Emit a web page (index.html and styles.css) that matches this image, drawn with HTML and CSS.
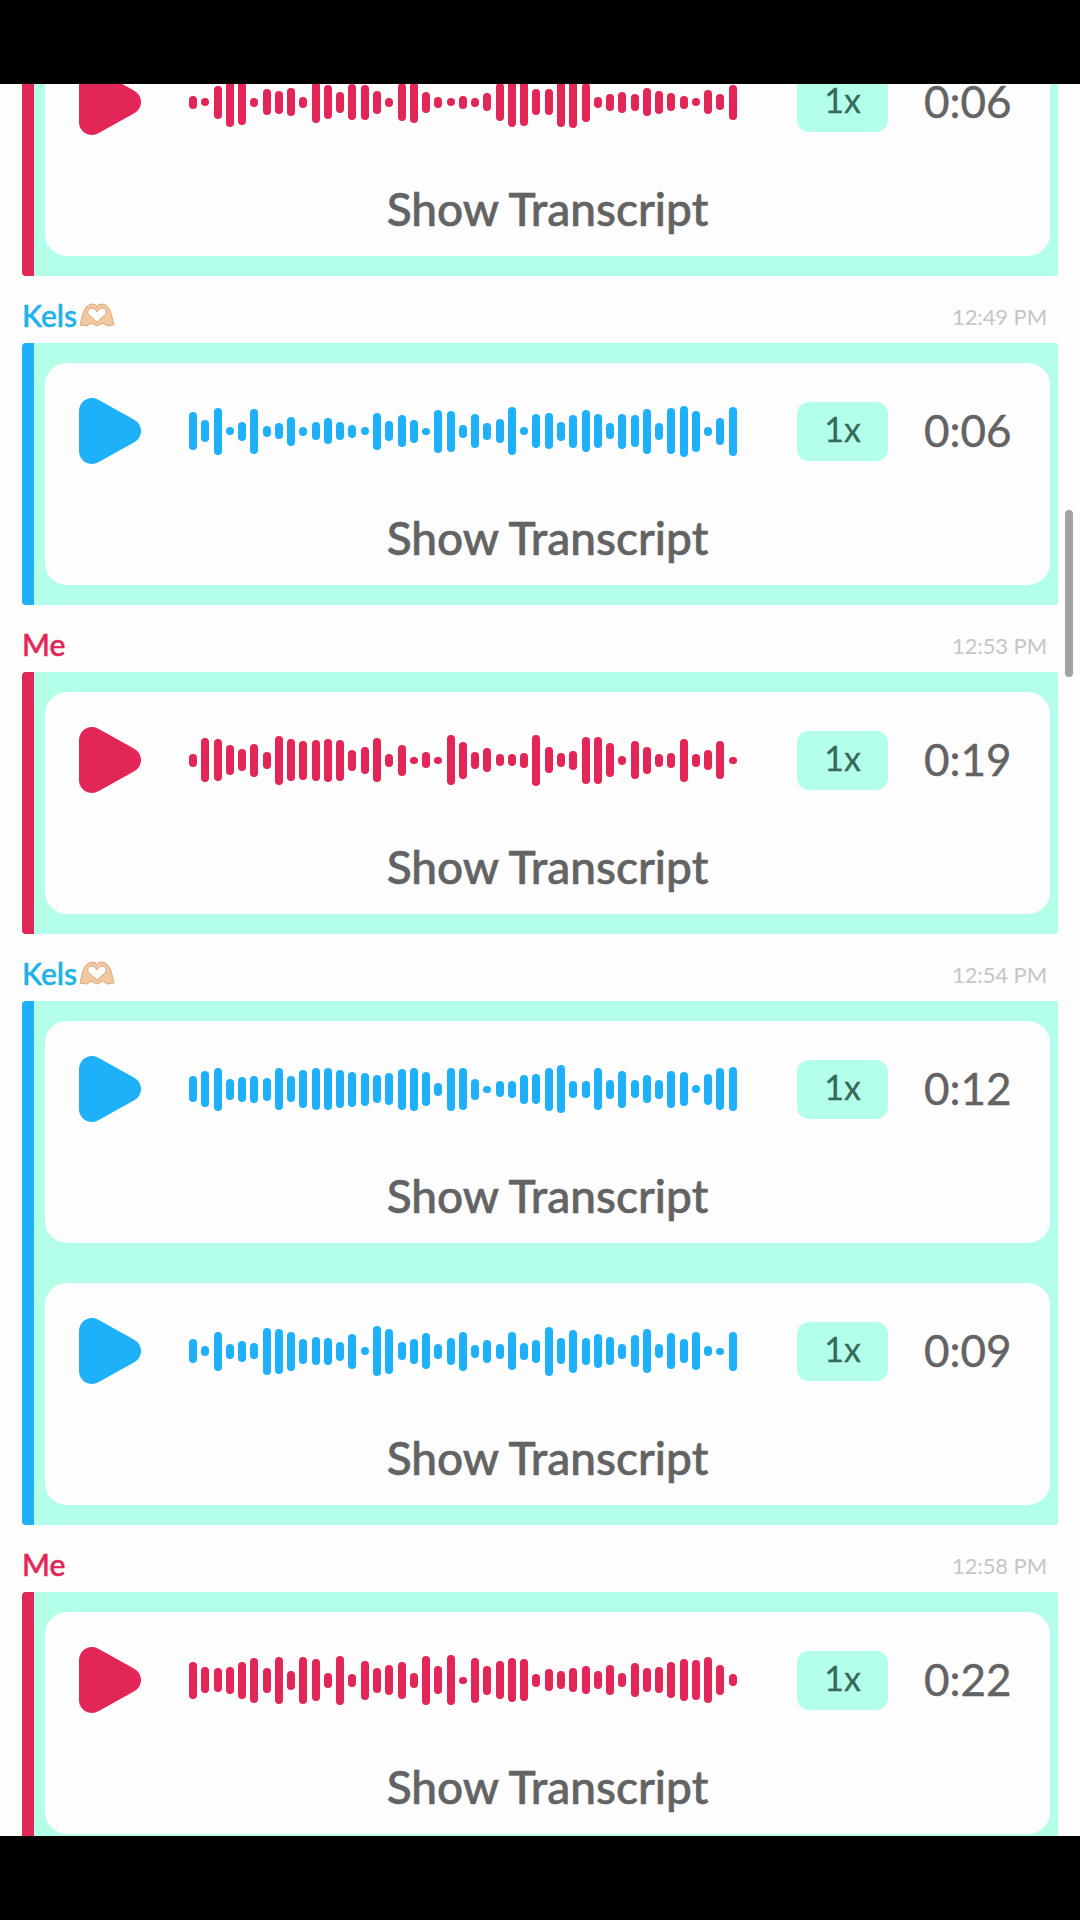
FILE: index.html
```html
<!DOCTYPE html>
<html lang="en">
<head>
    <meta charset="UTF-8">
    <meta name="viewport" content="width=device-width, initial-scale=1.0">
    <title>Chat</title>
    <link rel="stylesheet" href="styles.css">
</head>

<body>
    <svg class="defs" width="0" height="0">
        <symbol id="play" viewBox="0 0 62 66">
            <path d="M13 13 V53 L49 33 Z" fill="currentColor" stroke="currentColor" stroke-width="26" stroke-linejoin="round"/>
        </symbol>
        <symbol id="hearthands" viewBox="0 0 36 24">
            <path d="M1 22 L4 10 Q7 1 14 1 Q17 1 18 4 Q19 1 22 1 Q29 1 32 10 L35 22 L28 23 L24 20 L18 23 L12 20 L8 23 Z" fill="#f3c7a0" stroke="#dca97f" stroke-width="1"/>
            <path d="M18 19 L9 11 Q8 5 13 5 Q16 5 18 9 Q20 5 23 5 Q28 5 27 11 Z" fill="#fdfdfd" stroke="#dca97f" stroke-width="1"/>
        </symbol>
    </svg>

    <div class="bar"></div>

    <div class="chat">
        <!-- Scrolled part way through this one -->
        <div class="bubble me first">
            <div class="card">
                <div class="player">
                    <svg class="play"><use href="#play"/></svg>
                    <div class="wave" data-h="13 8 33 49 46 9 26 23 28 11 41 34 21 36 35 23 9 38 41 21 11 8 13 9 18 38 49 48 26 26 49 51 39 11 17 21 17 28 23 18 13 8 24 16 35"></div>
                    <div class="speed">1x</div>
                    <div class="duration">0:06</div>
                </div>
                <div class="transcript">Show Transcript</div>
            </div>
        </div>

        <div class="label kels">
            <span class="name">Kels<svg class="emoji"><use href="#hearthands"/></svg></span>
            <span class="time">12:49 PM</span>
        </div>
        <div class="bubble">
            <div class="card">
                <div class="player">
                    <svg class="play"><use href="#play"/></svg>
                    <div class="wave" data-h="38 22 47 8 19 45 11 16 29 9 18 26 18 13 8 37 20 32 23 7 43 41 13 34 17 24 48 8 34 36 19 33 42 34 16 35 32 45 17 46 51 41 9 27 49"></div>
                    <div class="speed">1x</div>
                    <div class="duration">0:06</div>
                </div>
                <div class="transcript">Show Transcript</div>
            </div>
        </div>

        <div class="label me">
            <span class="name">Me</span>
            <span class="time">12:53 PM</span>
        </div>
        <div class="bubble me">
            <div class="card">
                <div class="player">
                    <svg class="play"><use href="#play"/></svg>
                    <div class="wave" data-h="13 44 42 30 22 33 17 49 42 39 41 43 41 21 27 44 13 31 7 16 7 50 37 17 24 12 12 15 51 26 14 19 47 47 34 9 38 27 13 15 43 13 20 38 7"></div>
                    <div class="speed">1x</div>
                    <div class="duration">0:19</div>
                </div>
                <div class="transcript">Show Transcript</div>
            </div>
        </div>

        <div class="label kels">
            <span class="name">Kels<svg class="emoji"><use href="#hearthands"/></svg></span>
            <span class="time">12:54 PM</span>
        </div>
        <div class="bubble">
            <div class="card">
                <div class="player">
                    <svg class="play"><use href="#play"/></svg>
                    <div class="wave" data-h="26 36 43 21 25 27 23 42 26 38 42 42 38 35 33 28 32 41 43 34 13 43 42 21 7 16 17 29 30 43 48 17 17 42 19 37 18 28 19 37 34 8 31 42 44"></div>
                    <div class="speed">1x</div>
                    <div class="duration">0:12</div>
                </div>
                <div class="transcript">Show Transcript</div>
            </div>
        </div>
        <div class="bubble">
            <div class="card">
                <div class="player">
                    <svg class="play"><use href="#play"/></svg>
                    <div class="wave" data-h="24 10 39 15 21 16 47 45 39 25 28 27 19 35 8 50 45 18 25 36 15 27 39 13 23 15 38 17 23 49 26 43 27 34 28 15 32 44 14 36 24 38 10 7 39"></div>
                    <div class="speed">1x</div>
                    <div class="duration">0:09</div>
                </div>
                <div class="transcript">Show Transcript</div>
            </div>
        </div>

        <div class="label me">
            <span class="name">Me</span>
            <span class="time">12:58 PM</span>
        </div>
        <div class="bubble me">
            <div class="card">
                <div class="player">
                    <svg class="play"><use href="#play"/></svg>
                    <div class="wave" data-h="37 26 24 27 37 45 25 47 19 47 42 15 49 13 39 25 30 37 15 49 28 50 7 45 29 38 44 42 13 22 18 24 28 18 30 14 34 24 26 36 42 40 46 30 12"></div>
                    <div class="speed">1x</div>
                    <div class="duration">0:22</div>
                </div>
                <div class="transcript">Show Transcript</div>
            </div>
        </div>

        <div class="scrollbar"></div>
    </div>

    <div class="bar"></div>

    <script src="script.js"></script>
</body>
</html>
```

FILE: styles.css
```css
/* Reset */
* {
    margin: 0;
    padding: 0;
    box-sizing: border-box;
}

body {
    font-family: 'Lato', 'Liberation Sans', sans-serif;
    background-color: #000;
    display: flex;
    flex-direction: column;
    height: 1920px;
    width: 1080px;
    overflow: hidden;
}

.defs {
    position: absolute;
}

.bar {
    height: 84px;
    flex-shrink: 0;
    background-color: #000;
}

/* Chat list, already scrolled */
.chat {
    position: relative;
    height: 1752px;
    overflow: hidden;
    padding: 0 22px;
    background-color: #fdfdfd;
}

.chat .first {
    margin-top: -70px;
}

/* Sender row */
.label {
    height: 67px;
    padding: 13px 11px 0 0;
    display: flex;
    justify-content: space-between;
    align-items: center;
}

.name {
    display: flex;
    align-items: center;
    margin-bottom: 3px;
    font-size: 30px;
    font-weight: 500;
    -webkit-text-stroke: 0.5px currentColor;
}

.kels .name {
    color: #1fb1e9;
}

.me .name {
    color: #e22657;
}

.emoji {
    width: 36px;
    height: 24px;
    margin-left: 2px;
}

.time {
    font-size: 22px;
    letter-spacing: -0.1px;
    color: #c6c6c6;
}

/* Message */
.bubble {
    position: relative;
    height: 262px;
    padding: 20px 8px 20px 11px;
    background-color: #b3ffe9;
    border-left: 12px solid #1eb1fa;
    border-radius: 4px 2px 2px 4px;
    color: #1eb1fa;
}

.bubble.me {
    border-left-color: #e22657;
    color: #e22657;
}

.bubble:has(+ .bubble) {
    border-radius: 4px 2px 0 0;
}

.bubble + .bubble {
    border-radius: 0 0 2px 4px;
}

.card {
    height: 222px;
    padding-top: 35px;
    background-color: #fdfdfd;
    border-radius: 22px;
}

.player {
    display: flex;
    align-items: center;
    height: 66px;
    padding-left: 34px;
}

.play {
    width: 62px;
    height: 66px;
    flex-shrink: 0;
}

.wave {
    display: flex;
    justify-content: space-between;
    align-items: center;
    width: 548px;
    margin-left: 48px;
}

.wave div {
    width: 8px;
    border-radius: 4px;
    background-color: currentColor;
}

.speed {
    display: flex;
    align-items: center;
    justify-content: center;
    width: 91px;
    height: 59px;
    margin-left: 60px;
    padding-bottom: 4px;
    background-color: #b3ffe9;
    border-radius: 12px;
    font-size: 34px;
    line-height: 30px;
    color: #38685c;
    -webkit-text-stroke: 0.3px currentColor;
}

.duration {
    margin-left: 36px;
    margin-bottom: 3px;
    font-size: 44px;
    line-height: 34px;
    color: #636363;
    -webkit-text-stroke: 0.4px currentColor;
}

.transcript {
    margin-top: 41px;
    line-height: 66px;
    text-align: center;
    font-size: 46px;
    font-weight: 500;
    color: #636363;
    -webkit-text-stroke: 0.6px currentColor;
}

.scrollbar {
    position: absolute;
    top: 426px;
    left: 1065px;
    width: 8px;
    height: 167px;
    border-radius: 4px;
    background-color: #a3a3a3;
}
```

FILE: script.js
```js
// Builds the waveform bars from the heights in data-h
document.querySelectorAll('.wave').forEach((wave) => {
    wave.dataset.h.split(' ').forEach((h) => {
        const bar = document.createElement('div');
        bar.style.height = h + 'px';
        wave.appendChild(bar);
    });
});
```
